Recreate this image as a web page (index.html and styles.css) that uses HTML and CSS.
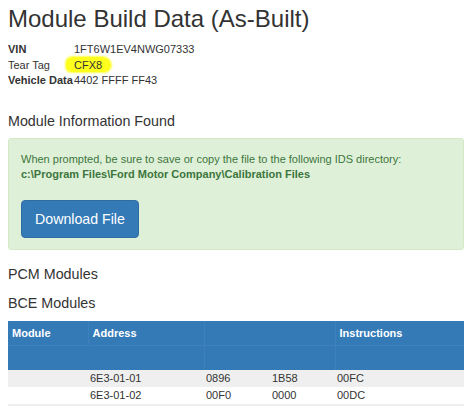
FILE: index.html
```html
<!DOCTYPE html>
<html lang="en">
<head>
    <meta charset="UTF-8">
    <meta name="viewport" content="width=device-width, initial-scale=1.0">
    <title>Module Build Data (As-Built)</title>
    <link rel="stylesheet" href="styles.css">
</head>
<body>
    <div class="container">
        <h1>Module Build Data (As-Built)</h1>

        <dl class="vehicle-info">
            <div class="info-row">
                <dt>VIN</dt>
                <dd>1FT6W1EV4NWG07333</dd>
            </div>
            <div class="info-row">
                <dt class="plain">Tear Tag</dt>
                <dd><span class="marker">CFX8</span></dd>
            </div>
            <div class="info-row">
                <dt>Vehicle Data</dt>
                <dd>4402 FFFF FF43</dd>
            </div>
        </dl>

        <h4 class="section-title">Module Information Found</h4>
        <div class="alert-success">
            <p>When prompted, be sure to save or copy the file to the following IDS directory:<br>
            <strong>c:\Program Files\Ford Motor Company\Calibration Files</strong></p>
            <button class="btn-primary">Download File</button>
        </div>

        <h4 class="section-title pcm">PCM Modules</h4>
        <h4 class="section-title bce">BCE Modules</h4>

        <table class="modules">
            <colgroup>
                <col class="c-module">
                <col class="c-address">
                <col class="c-data">
                <col class="c-data2">
                <col>
            </colgroup>
            <thead>
                <tr>
                    <th>Module</th>
                    <th>Address</th>
                    <th colspan="2"></th>
                    <th>Instructions</th>
                </tr>
                <tr>
                    <th></th>
                    <th class="no-edge"></th>
                    <th colspan="2"></th>
                    <th></th>
                </tr>
            </thead>
            <tbody>
                <tr class="striped">
                    <td></td>
                    <td>6E3-01-01</td>
                    <td>0896</td>
                    <td>1B58</td>
                    <td>00FC</td>
                </tr>
                <tr>
                    <td></td>
                    <td>6E3-01-02</td>
                    <td>00F0</td>
                    <td>0000</td>
                    <td>00DC</td>
                </tr>
            </tbody>
        </table>
    </div>
</body>
</html>
```

FILE: styles.css
```css
body { margin: 0; background-color: white; color: #333; font-family: "Liberation Sans", Arial, sans-serif; font-size: 11px; }
.container { padding: 6px 10px 0 8px; }

h1 { margin: 0; font-size: 24px; font-weight: normal; line-height: 26px; }

.vehicle-info { margin: 10px 0 0 0; line-height: 15.5px; }
.info-row { display: flex; }
.info-row dt { min-width: 66px; font-weight: bold; white-space: nowrap; }
.info-row dt.plain { font-weight: normal; }
.info-row dd { margin: 0; }
.marker { background-color: #ffff1e; margin-left: -8px; padding: 2px 9px 1px 8px; border-radius: 7px 10px 8px 6px; box-shadow: 0 0 2px 1px #ffff50; }

.section-title { margin: 22px 0 0 0; font-size: 14.3px; font-weight: normal; line-height: 20px; }
.section-title.pcm { margin-top: 14px; }
.section-title.bce { margin-top: 9px; }

.alert-success { margin-top: 7px; padding: 13px 12px 11px 12px; background-color: #dff0d8; border: 1px solid #d6e9c6; border-radius: 3px; color: #3c763d; }
.alert-success p { margin: 0; line-height: 15.5px; }
.btn-primary { margin-top: 17px; padding: 8px 13px; font-family: inherit; font-size: 14.2px; line-height: 20px; color: white; background-color: #337ab7; border: 1px solid #2e6da4; border-radius: 4px; }

.modules { width: 456px; margin-top: 8px; border-collapse: collapse; table-layout: fixed; }
.c-module { width: 80px; }
.c-address { width: 116px; }
.c-data { width: 66px; }
.c-data2 { width: 65px; }
.modules th { height: 24px; padding: 0 4px; text-align: left; font-weight: bold; color: white; background-color: #337ab7; border-left: 1px solid #3d82be; border-bottom: 1px solid #3d82be; }
.modules th:first-child { border-left: none; }
.modules th.no-edge { border-left-color: #337ab7; }
.modules thead tr:last-child th { border-bottom: none; }
.modules td { height: 17px; padding: 0 2px; line-height: 17px; }
.modules tbody tr:last-child td { border-bottom: 2px solid #eee; }
.striped td { background-color: #efefef; }
```
